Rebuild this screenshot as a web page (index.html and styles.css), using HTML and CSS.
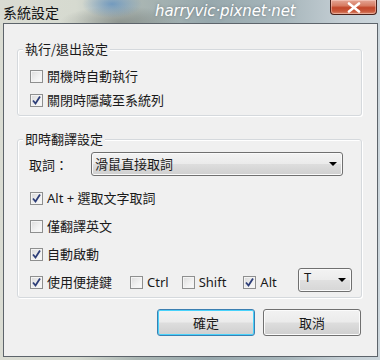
FILE: index.html
```html
<!DOCTYPE html>
<html>
<head>
<meta charset="utf-8">
<link rel="stylesheet" href="styles.css">
</head>
<body>
<div class="window">
  <div class="titlebar">
    <span class="title">系統設定</span>
    <span class="watermark">harryvic·pixnet·net</span>
    <span class="close"><svg width="14" height="11" viewBox="0 0 14 11"><path d="M2 1.5 L12 9.5 M12 1.5 L2 9.5" stroke="#fff" stroke-width="2.6" stroke-linecap="round"/></svg></span>
  </div>
  <div class="client">
    <div class="group g1">
      <div class="legend">執行/退出設定</div>
      <div class="rows">
        <div class="row"><span class="cb"></span><span class="lbl">開機時自動執行</span></div>
        <div class="row"><span class="cb checked"><svg width="11" height="11" viewBox="0 0 11 11"><path d="M2 5.5 L4.5 8.5 L9 1.5" fill="none" stroke="#2d3e78" stroke-width="1.8"/></svg></span><span class="lbl">關閉時隱藏至系統列</span></div>
      </div>
    </div>
    <div class="group g2">
      <div class="legend">即時翻譯設定</div>
      <div class="rows">
        <div class="row combo-row">
          <span class="combo-label">取詞：</span>
          <span class="combo wide"><span class="combo-text">滑鼠直接取詞</span><span class="arrow"></span></span>
        </div>
        <div class="row tall"><span class="cb checked"><svg width="11" height="11" viewBox="0 0 11 11"><path d="M2 5.5 L4.5 8.5 L9 1.5" fill="none" stroke="#2d3e78" stroke-width="1.8"/></svg></span><span class="lbl">Alt + 選取文字取詞</span></div>
        <div class="row tall"><span class="cb"></span><span class="lbl">僅翻譯英文</span></div>
        <div class="row tall"><span class="cb checked"><svg width="11" height="11" viewBox="0 0 11 11"><path d="M2 5.5 L4.5 8.5 L9 1.5" fill="none" stroke="#2d3e78" stroke-width="1.8"/></svg></span><span class="lbl">自動啟動</span></div>
        <div class="row tall last">
          <span class="cb checked"><svg width="11" height="11" viewBox="0 0 11 11"><path d="M2 5.5 L4.5 8.5 L9 1.5" fill="none" stroke="#2d3e78" stroke-width="1.8"/></svg></span><span class="lbl">使用便捷鍵</span>
          <span class="cb ctrl"></span><span class="lbl">Ctrl</span>
          <span class="cb shift"></span><span class="lbl">Shift</span>
          <span class="cb checked alt"><svg width="11" height="11" viewBox="0 0 11 11"><path d="M2 5.5 L4.5 8.5 L9 1.5" fill="none" stroke="#2d3e78" stroke-width="1.8"/></svg></span><span class="lbl">Alt</span>
          <span class="combo small"><span class="combo-text">T</span><span class="arrow"></span></span>
        </div>
      </div>
    </div>
    <div class="buttons">
      <span class="btn default">確定</span>
      <span class="btn">取消</span>
    </div>
  </div>
</div>
</body>
</html>
```

FILE: styles.css
```css
html, body {
  margin: 0;
  padding: 0;
  width: 380px;
  height: 360px;
  overflow: hidden;
}
body {
  font-family: "Noto Sans", "Noto Sans CJK TC", sans-serif;
  font-size: 13px;
  color: #1a1a1a;
}
.window {
  width: 380px;
  height: 360px;
  display: flex;
  flex-direction: column;
  background:
    radial-gradient(ellipse 30px 14px at 112px 4px, rgba(90,140,190,0.75), rgba(90,140,190,0) 100%),
    radial-gradient(ellipse 60px 16px at 120px 22px, rgba(110,115,110,0.55), rgba(110,115,110,0) 100%),
    linear-gradient(90deg, #dadcd3 0%, #d6dad0 20%, #aab6b3 36%, #97a8ad 55%, #a7b6bb 75%, #c4ced4 90%, #ccd6dc 100%);
}
.titlebar {
  height: 23px;
  display: flex;
  align-items: flex-start;
  flex: none;
}
.title {
  font-family: "Noto Sans CJK TC", sans-serif;
  font-size: 14px;
  line-height: 16px;
  margin: 4px 0 0 3px;
  color: #111;
}
.watermark {
  font-family: "DejaVu Sans", sans-serif;
  font-style: italic;
  font-size: 15px;
  line-height: 18px;
  margin: 2px 0 0 96px;
  color: #fff;
  text-shadow: 0 0 3px rgba(80,90,95,0.6);
  letter-spacing: -0.1px;
}
.close {
  margin-left: auto;
  margin-right: 3px;
  width: 45px;
  height: 14px;
  border: 1px solid #4a211a;
  border-top: none;
  border-radius: 0 0 4px 4px;
  background: linear-gradient(180deg, #e4a796 0%, #d77c63 40%, #c2472a 55%, #c9583b 80%, #d98a6f 100%);
  box-shadow: inset 0 0 0 1px rgba(255,220,210,0.45);
  display: flex;
  align-items: center;
  justify-content: center;
}
.client {
  flex: 1;
  margin: 0 2px 3px 3px;
  border: 1px solid #5d646b;
  background: #f0f0f0;
  padding: 0 15px 0 13px;
  display: flex;
  flex-direction: column;
}
.group {
  border: 1px solid #d5d9dd;
  border-radius: 3px;
  box-shadow: inset 1px 1px 0 #fff, 1px 1px 0 #fff;
}
.g1 {
  margin-top: 25px;
  padding-bottom: 3px;
}
.g2 {
  margin-top: 23px;
  padding-bottom: 1px;
}
.legend {
  font-family: "Noto Sans CJK TC", sans-serif;
  width: fit-content;
  margin: -10px 0 0 5px;
  padding: 0 2px 0 2px;
  height: 18px;
  line-height: 18px;
  background: #f0f0f0;
}
.rows {
  display: flex;
  flex-direction: column;
  padding-left: 12px;
}
.g1 .rows {
  margin-top: 6px;
}
.g2 .rows {
  margin-top: 4px;
}
.row {
  height: 24px;
  display: flex;
  align-items: center;
}
.row.tall {
  height: 28px;
}
.row.combo-row {
  height: 24px;
  margin-bottom: 8px;
}
.cb {
  width: 11px;
  height: 11px;
  border: 1px solid #8e8f8f;
  background: linear-gradient(135deg, #dcdcdc 0%, #f2f2f2 60%, #fbfbfb 100%);
  box-shadow: inset 0 0 0 1px #f4f4f4;
  flex: none;
  display: flex;
  align-items: center;
  justify-content: center;
}
.cb.checked {
  background: linear-gradient(135deg, #d8d8d8 0%, #f0f0f0 60%, #fafafa 100%);
}
.lbl {
  margin-left: 4px;
  line-height: 16px;
  font-family: "Noto Sans", "Noto Sans CJK TC", sans-serif;
}
.cb.ctrl { margin-left: 18px; }
.cb.shift { margin-left: 13px; }
.cb.alt { margin-left: 17px; }
.combo-label {
  font-family: "Noto Sans CJK TC", sans-serif;
  margin-left: -1px;
  width: 62px;
}
.combo {
  height: 22px;
  border: 1px solid #707070;
  border-radius: 3px;
  background: linear-gradient(180deg, #f3f3f3 0%, #ebebeb 48%, #dddddd 52%, #cfcfcf 100%);
  box-shadow: inset 0 0 0 1px #fafafa;
  display: flex;
  align-items: center;
}
.combo.wide {
  width: 250px;
}
.combo.small {
  width: 52px;
  margin-left: auto;
  margin-right: 9px;
  margin-bottom: 5px;
  background: linear-gradient(180deg, #f3f3f3 0%, #ececec 48%, #e0e0e0 52%, #d6d6d6 100%);
}
.combo-text {
  margin-left: 3px;
  font-family: "Noto Sans CJK TC", sans-serif;
  line-height: 16px;
}
.combo.small .combo-text {
  margin-left: 5px;
  margin-top: -5px;
  font-family: "Noto Sans", sans-serif;
}
.arrow {
  margin-left: auto;
  margin-right: 5px;
  width: 0;
  height: 0;
  border-left: 4px solid transparent;
  border-right: 4px solid transparent;
  border-top: 4px solid #000;
}
.buttons {
  margin-top: 11px;
  display: flex;
  justify-content: flex-end;
  gap: 8px;
  padding-right: 1px;
}
.btn {
  width: 96px;
  height: 25px;
  border: 1px solid #707070;
  border-radius: 3px;
  background: linear-gradient(180deg, #f2f2f2 0%, #ebebeb 48%, #dddddd 52%, #cfcfcf 100%);
  box-shadow: inset 0 0 0 1px #fbfbfb;
  display: flex;
  align-items: center;
  justify-content: center;
  font-family: "Noto Sans CJK TC", sans-serif;
  line-height: 16px;
}
.btn.default {
  border-color: #3c7fb1;
  box-shadow: inset 0 0 0 1px #48d2fb;
}
```
